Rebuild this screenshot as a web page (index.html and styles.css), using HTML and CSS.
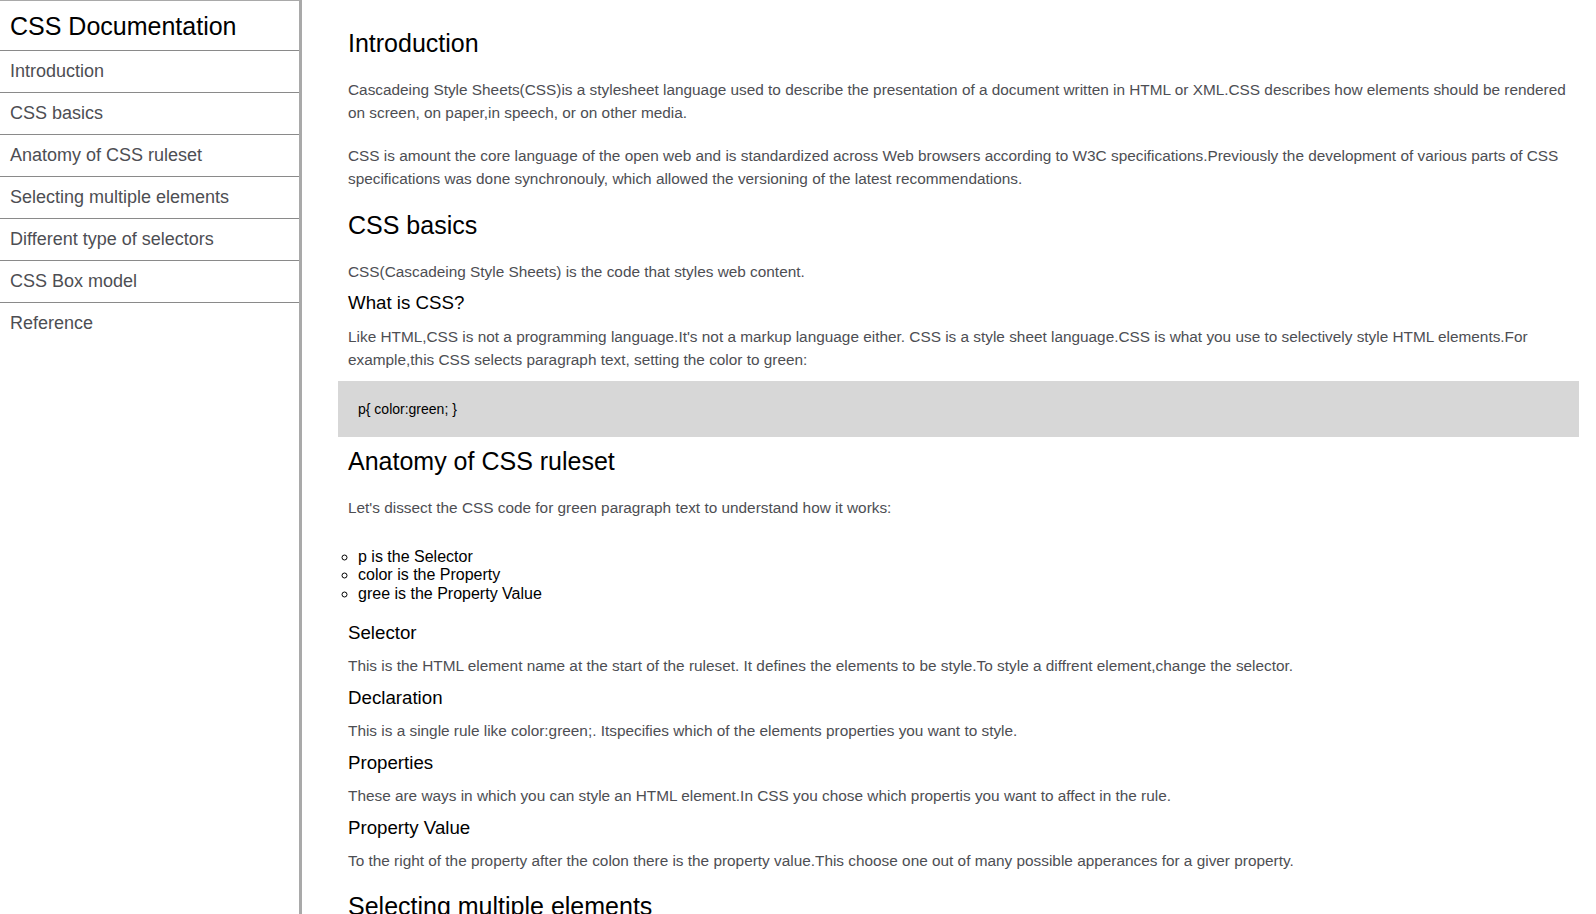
FILE: index.html
```html
<!DOCTYPE html>
<html lang="en">
<head>
<meta charset="utf-8">
<title>CSS Documentation</title>
<link rel="stylesheet" href="styles.css">
</head>
<body>
<div class="page">
  <nav class="navbar" id="navbar">
    <header class="nav-title">CSS Documentation</header>
    <ul class="nav-list">
      <li><a class="nav-link" href="#Introduction">Introduction</a></li>
      <li><a class="nav-link" href="#CSS_basics">CSS basics</a></li>
      <li><a class="nav-link" href="#Anatomy_of_CSS_ruleset">Anatomy of CSS ruleset</a></li>
      <li><a class="nav-link" href="#Selecting_multiple_elements">Selecting multiple elements</a></li>
      <li><a class="nav-link" href="#Different_type_of_selectors">Different type of selectors</a></li>
      <li><a class="nav-link" href="#CSS_Box_model">CSS Box model</a></li>
      <li><a class="nav-link" href="#Reference">Reference</a></li>
    </ul>
  </nav>
  <main class="main-doc" id="main-doc">
    <section class="main-section intro" id="Introduction">
      <header class="sec-title">Introduction</header>
      <p class="text">Cascadeing Style Sheets(CSS)is a stylesheet language used to describe the presentation of a document written in HTML or XML.CSS describes how elements should be rendered on screen, on paper,in speech, or on other media.</p>
      <p class="text">CSS is amount the core language of the open web and is standardized across Web browsers according to W3C specifications.Previously the development of various parts of CSS specifications was done synchronouly, which allowed the versioning of the latest recommendations.</p>
    </section>
    <section class="main-section" id="CSS_basics">
      <header class="sec-title">CSS basics</header>
      <p class="text">CSS(Cascadeing Style Sheets) is the code that styles web content.</p>
      <h3 class="sub-title">What is CSS?</h3>
      <p class="text">Like HTML,CSS is not a programming language.It's not a markup language either. CSS is a style sheet language.CSS is what you use to selectively style HTML elements.For example,this CSS selects paragraph text, setting the color to green:</p>
      <code class="code-block">p{ color:green; }</code>
    </section>
    <section class="main-section" id="Anatomy_of_CSS_ruleset">
      <header class="sec-title">Anatomy of CSS ruleset</header>
      <p class="text">Let's dissect the CSS code for green paragraph text to understand how it works:</p>
      <ul class="parts">
        <li>p is the Selector</li>
        <li>color is the Property</li>
        <li>gree is the Property Value</li>
      </ul>
      <h3 class="sub-title">Selector</h3>
      <p class="text">This is the HTML element name at the start of the ruleset. It defines the elements to be style.To style a diffrent element,change the selector.</p>
      <h3 class="sub-title">Declaration</h3>
      <p class="text">This is a single rule like color:green;. Itspecifies which of the elements properties you want to style.</p>
      <h3 class="sub-title">Properties</h3>
      <p class="text">These are ways in which you can style an HTML element.In CSS you chose which propertis you want to affect in the rule.</p>
      <h3 class="sub-title">Property Value</h3>
      <p class="text last">To the right of the property after the colon there is the property value.This choose one out of many possible apperances for a giver property.</p>
    </section>
    <section class="main-section" id="Selecting_multiple_elements">
      <header class="sec-title">Selecting multiple elements</header>
      <p class="text">You can also select multiple types of elements and apply a single rule set to all of them. Include multiple selectors separated by commas.</p>
    </section>
  </main>
</div>
</body>
</html>
```

FILE: styles.css
```css
html, body {
  margin: 0;
  padding: 0;
  background: #ffffff;
  font-family: "Liberation Sans", Arial, sans-serif;
}

.page {
  display: flex;
  align-items: flex-start;
}

.navbar {
  position: sticky;
  top: 0;
  flex: 0 0 302px;
  width: 302px;
  height: 100vh;
  box-sizing: border-box;
  border-top: 1px solid #a9a9a9;
  border-right: 3px solid #a9a9a9;
}

.nav-title {
  height: 50px;
  box-sizing: border-box;
  padding: 10px 0 0 10px;
  font-size: 25px;
  line-height: 30px;
  color: #000;
  border-bottom: 1px solid #8a8a8a;
}

.nav-list {
  list-style: none;
  margin: 0;
  padding: 0;
}

.nav-list li {
  height: 42px;
  box-sizing: border-box;
  border-bottom: 1px solid #8a8a8a;
}

.nav-list li:last-child {
  border-bottom: none;
}

.nav-link {
  display: block;
  padding: 10px 0 0 10px;
  font-size: 18px;
  line-height: 21px;
  color: #4d4e53;
  text-decoration: none;
}

.main-doc {
  flex: 1;
  min-width: 0;
  padding: 28px 17px 0 36px;
}

.sec-title {
  display: block;
  padding-left: 10px;
  margin: 0 0 20px;
  font-size: 25px;
  line-height: 30px;
  color: #000;
}

.text {
  margin: 0 0 9px;
  padding: 0 10px;
  font-size: 15.36px;
  line-height: 23px;
  color: #4d4e53;
}

.intro .text {
  margin-bottom: 20px;
}

.parts ~ .text {
  margin-bottom: 10px;
}

.text.last {
  margin-bottom: 19px;
}

.sub-title {
  margin: 0 0 11px;
  padding-left: 10px;
  font-size: 18.7px;
  line-height: 22px;
  font-weight: normal;
  color: #000;
}

.parts ~ .sub-title {
  margin-bottom: 10px;
}

.code-block {
  display: block;
  margin: 10px 0 9px;
  padding: 20px;
  background: #d7d7d7;
  font-family: "Liberation Sans", Arial, sans-serif;
  font-size: 14px;
  line-height: 16px;
  color: #000;
}

.parts {
  margin: 29px 0 19px;
  padding-left: 20px;
  list-style: circle;
  font-size: 16px;
  line-height: 18.4px;
  color: #000;
}
```
